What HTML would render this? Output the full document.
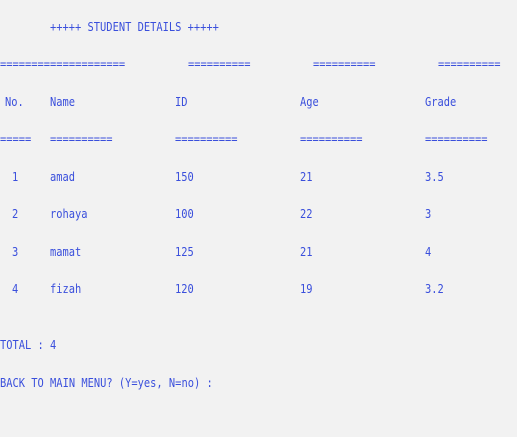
<!DOCTYPE html>
<html><head><meta charset="utf-8"><style>
html,body{margin:0;padding:0;}
body{width:517px;height:437px;background:#f2f2f2;position:relative;overflow:hidden;
font-family:"DejaVu Sans Mono","Liberation Mono",monospace;font-size:12px;color:#3a4fdc;}
div{position:absolute;white-space:pre;line-height:14px;transform:scaleX(0.866);transform-origin:0 0;}
</style></head><body>
<div style="left:50px;top:20px">+++++ STUDENT DETAILS +++++</div>
<div style="left:0;top:57px">====================</div>
<div style="left:188px;top:57px">==========</div>
<div style="left:313px;top:57px">==========</div>
<div style="left:438px;top:57px">==========</div>
<div style="left:5px;top:95px">No.</div>
<div style="left:50px;top:95px">Name</div>
<div style="left:175px;top:95px">ID</div>
<div style="left:300px;top:95px">Age</div>
<div style="left:425px;top:95px">Grade</div>
<div style="left:0;top:132px">=====</div>
<div style="left:50px;top:132px">==========</div>
<div style="left:175px;top:132px">==========</div>
<div style="left:300px;top:132px">==========</div>
<div style="left:425px;top:132px">==========</div>

<div style="left:12px;top:170px">1</div><div style="left:50px;top:170px">amad</div><div style="left:175px;top:170px">150</div><div style="left:300px;top:170px">21</div><div style="left:425px;top:170px">3.5</div>
<div style="left:12px;top:207px">2</div><div style="left:50px;top:207px">rohaya</div><div style="left:175px;top:207px">100</div><div style="left:300px;top:207px">22</div><div style="left:425px;top:207px">3</div>
<div style="left:12px;top:245px">3</div><div style="left:50px;top:245px">mamat</div><div style="left:175px;top:245px">125</div><div style="left:300px;top:245px">21</div><div style="left:425px;top:245px">4</div>
<div style="left:12px;top:282px">4</div><div style="left:50px;top:282px">fizah</div><div style="left:175px;top:282px">120</div><div style="left:300px;top:282px">19</div><div style="left:425px;top:282px">3.2</div>

<div style="left:0;top:338px">TOTAL : 4</div>
<div style="left:0;top:376px">BACK TO MAIN MENU? (Y=yes, N=no) :</div>
</body></html>
